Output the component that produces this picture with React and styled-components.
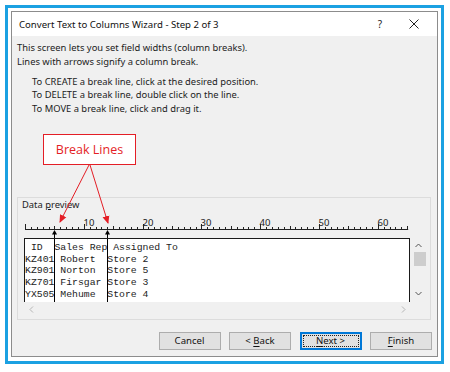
import React from "react";
import styled, { createGlobalStyle } from "styled-components";

const GlobalStyle = createGlobalStyle`
  html, body {
    margin: 0;
    padding: 0;
    background: #ffffff;
  }
  body {
    font-family: "Noto Sans", "Open Sans", sans-serif;
  }
`;

const CHAR_W = 5.88;
const BREAKS = [5, 14];

const Frame = styled.div`
  box-sizing: border-box;
  margin: 5px 0 0 5px;
  width: 439px;
  height: 359px;
  border: 3px solid #1ba1e2;
  padding: 3px 3px 4px 3px;
`;

const Dialog = styled.div`
  position: relative;
  box-sizing: border-box;
  width: 427px;
  height: 346px;
  border: 1px solid #8c8c8c;
  display: flex;
  flex-direction: column;
  background: #f0f0f0;
`;

const TitleBar = styled.div`
  height: 24px;
  flex-shrink: 0;
  background: #ffffff;
  display: flex;
  align-items: center;
  padding-left: 7px;
  font-size: 9.6px;
  color: #111;
  .title {
    flex: 1;
  }
  .help {
    width: 14px;
    text-align: center;
    font-size: 10px;
    margin-right: 20px;
    color: #222;
  }
  .close {
    display: flex;
    width: 14px;
    justify-content: center;
    margin-right: 16px;
  }
`;

const Body = styled.div`
  flex: 1;
  display: flex;
  flex-direction: column;
  padding: 5px 0 0 0;
  font-size: 9.4px;
  color: #1c1c1c;
`;

const Intro = styled.div`
  padding-left: 5px;
  line-height: 13.6px;
`;

const Steps = styled.div`
  margin-top: 6.5px;
  padding-left: 20px;
  line-height: 13.7px;
`;

const GroupBox = styled.div`
  box-sizing: border-box;
  margin: 81px 6px 0 5px;
  height: 123px;
  border: 1px solid #dcdcdc;
  padding-left: 6px;
  display: flex;
  flex-direction: column;
`;

const GroupLabel = styled.div`
  line-height: 13px;
  margin-left: -2px;
  u {
    text-decoration-thickness: 1px;
  }
`;

const RulerSvg = styled.svg`
  display: block;
  margin-top: 5px;
  overflow: visible;
`;

const PreviewGrid = styled.div`
  display: grid;
  grid-template-columns: 386px 17px;
  grid-template-rows: 64px 15px;
`;

const PreviewBox = styled.div`
  position: relative;
  box-sizing: border-box;
  border: 1px solid #1a1a1a;
  border-bottom: none;
  background: #ffffff;
  overflow: hidden;
`;

const DataText = styled.pre`
  margin: 0;
  padding-top: 3px;
  font-family: "Liberation Mono", monospace;
  font-size: 9.8px;
  line-height: 11.8px;
  color: #222;
`;

const BreakLine = styled.div`
  position: absolute;
  top: 0;
  bottom: 0;
  width: 1px;
  background: #000;
`;

const VScroll = styled.div`
  display: flex;
  flex-direction: column;
  align-items: center;
  padding-top: 5px;
  .thumb {
    width: 12px;
    height: 14px;
    background: #cdcdcd;
    margin-top: 4px;
    margin-left: 2px;
  }
  .down {
    margin-top: auto;
    margin-bottom: 6px;
  }
`;

const HScroll = styled.div`
  display: flex;
  align-items: center;
  justify-content: space-between;
  padding: 0 4px 0 5px;
`;

const ButtonRow = styled.div`
  display: flex;
  justify-content: flex-end;
  gap: 8.5px;
  margin-top: 12px;
  padding-right: 5px;
`;

const Button = styled.div`
  box-sizing: border-box;
  width: 62px;
  height: 18px;
  display: flex;
  align-items: center;
  justify-content: center;
  background: #e1e1e1;
  border: 1px solid ${(p) => (p.$primary ? "#0078d7" : "#adadad")};
  box-shadow: ${(p) => (p.$primary ? "inset 0 0 0 1px #0078d7" : "none")};
  font-size: 9.6px;
  color: #111;
  position: relative;
  &::after {
    content: "";
    display: ${(p) => (p.$primary ? "block" : "none")};
    position: absolute;
    inset: 2px;
    border: 1px dotted #222;
  }
  u {
    text-decoration-thickness: 1px;
    text-underline-offset: 1.5px;
  }
`;

const Callout = styled.div`
  position: absolute;
  left: 31px;
  top: 122px;
  box-sizing: border-box;
  width: 93px;
  height: 31px;
  border: 1px solid #e41e26;
  background: #ffffff;
  color: #e41e26;
  font-family: "Open Sans", sans-serif;
  font-size: 12.5px;
  display: flex;
  align-items: center;
  justify-content: center;
`;

const Overlay = styled.svg`
  position: absolute;
  left: 0;
  top: 0;
  pointer-events: none;
`;

function Chevron({ dir, color }) {
  const paths = {
    up: "M0.5 4 L3.5 1 L6.5 4",
    down: "M0.5 1 L3.5 4 L6.5 1",
    left: "M4 0.5 L1 3.5 L4 6.5",
    right: "M1 0.5 L4 3.5 L1 6.5",
  };
  const vertical = dir === "up" || dir === "down";
  return (
    <svg width={vertical ? 7 : 5} height={vertical ? 5 : 7} className={dir}>
      <path d={paths[dir]} fill="none" stroke={color} strokeWidth="1" />
    </svg>
  );
}

function Ruler() {
  const ticks = [];
  const labels = [];
  for (let i = 0; i <= 65; i++) {
    const x = Math.round(1 + i * CHAR_W) + 0.5;
    const h = i % 10 === 0 ? 5 : i % 5 === 0 ? 3 : 2;
    ticks.push(<line key={i} x1={x} x2={x} y1={13 - h} y2={13} stroke="#222" strokeWidth="1" />);
    if (i % 10 === 0 && i > 0) {
      labels.push(
        <text key={"l" + i} x={x - 1} y={10} fontSize="9.5" fill="#222" fontFamily="Noto Sans, sans-serif">
          {i}
        </text>
      );
    }
  }
  return (
    <RulerSvg width="386" height="22">
      <line x1="1" x2={1 + 65 * CHAR_W + 1} y1="13.5" y2="13.5" stroke="#222" strokeWidth="1" />
      {ticks}
      {labels}
      {BREAKS.map((c) => {
        const x = Math.round(1 + c * CHAR_W) + 0.5;
        return (
          <g key={c}>
            <polygon points={`${x},14 ${x - 2.5},18.5 ${x + 2.5},18.5`} fill="#000" />
            <line x1={x} x2={x} y1="18" y2="22" stroke="#000" strokeWidth="1" />
          </g>
        );
      })}
    </RulerSvg>
  );
}

const rows = [
  " ID  Sales Rep Assigned To",
  "KZ401 Robert  Store 2",
  "KZ901 Norton  Store 5",
  "KZ701 Firsgar Store 3",
  "YX505 Mehume  Store 4",
];

export default function App() {
  return (
    <>
      <GlobalStyle />
      <Frame>
        <Dialog>
          <TitleBar>
            <span className="title">Convert Text to Columns Wizard - Step 2 of 3</span>
            <span className="help">?</span>
            <span className="close">
              <svg width="10" height="10">
                <path d="M0.5 0.5 L9.5 9.5 M9.5 0.5 L0.5 9.5" stroke="#222" strokeWidth="1" />
              </svg>
            </span>
          </TitleBar>
          <Body>
            <Intro>
              <div>This screen lets you set field widths (column breaks).</div>
              <div>Lines with arrows signify a column break.</div>
            </Intro>
            <Steps>
              <div>To CREATE a break line, click at the desired position.</div>
              <div>To DELETE a break line, double click on the line.</div>
              <div>To MOVE a break line, click and drag it.</div>
            </Steps>
            <GroupBox>
              <GroupLabel>
                Data <u>p</u>review
              </GroupLabel>
              <Ruler />
              <PreviewGrid>
                <PreviewBox>
                  <DataText>{rows.join("\n")}</DataText>
                  {BREAKS.map((c) => (
                    <BreakLine key={c} style={{ left: Math.round(c * CHAR_W) }} />
                  ))}
                </PreviewBox>
                <VScroll>
                  <Chevron dir="up" color="#555" />
                  <div className="thumb" />
                  <Chevron dir="down" color="#555" />
                </VScroll>
                <HScroll>
                  <Chevron dir="left" color="#b5b5b5" />
                  <Chevron dir="right" color="#b5b5b5" />
                </HScroll>
              </PreviewGrid>
            </GroupBox>
            <ButtonRow>
              <Button>Cancel</Button>
              <Button>
                &lt;&nbsp;<u>B</u>ack
              </Button>
              <Button $primary>
                <u>N</u>ext &gt;
              </Button>
              <Button>
                <u>F</u>inish
              </Button>
            </ButtonRow>
          </Body>
          <Callout>Break Lines</Callout>
          <Overlay width="425" height="345">
            <defs>
              <marker id="ah" markerWidth="8" markerHeight="8" refX="7" refY="4" orient="auto" markerUnits="userSpaceOnUse">
                <path d="M0 0.5 L8 4 L0 7.5 Z" fill="#e41e26" />
              </marker>
            </defs>
            <line x1="77" y1="153" x2="48" y2="210" stroke="#e41e26" strokeWidth="1" markerEnd="url(#ah)" />
            <line x1="78" y1="153" x2="96" y2="211" stroke="#e41e26" strokeWidth="1" markerEnd="url(#ah)" />
          </Overlay>
        </Dialog>
      </Frame>
    </>
  );
}
